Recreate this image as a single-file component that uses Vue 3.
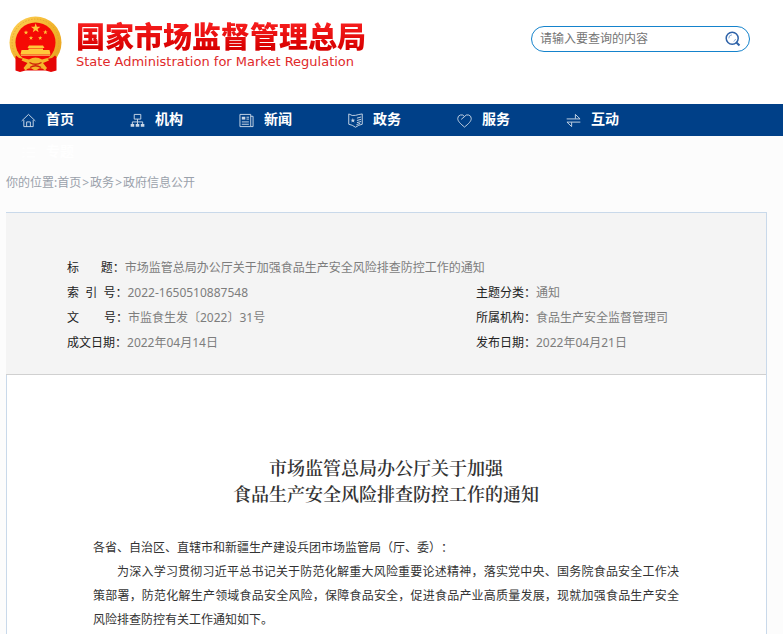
<script setup>
import { ref } from 'vue'

const keyword = ref('')

const nav = [
  { text: '首页', icon: 'home' },
  { text: '机构', icon: 'org' },
  { text: '新闻', icon: 'news' },
  { text: '政务', icon: 'gov' },
  { text: '服务', icon: 'heart' },
  { text: '互动', icon: 'swap' },
  { text: '专题', icon: 'list' }
]

const meta = [
  { label: '标\u00a0\u00a0\u00a0\u00a0\u00a0\u00a0\u00a0题：', value: '市场监管总局办公厅关于加强食品生产安全风险排查防控工作的通知', wide: true },
  { label: '索\u00a0\u00a0引\u00a0\u00a0号：', value: '2022-1650510887548' },
  { label: '主题分类：', value: '通知' },
  { label: '文\u00a0\u00a0\u00a0\u00a0\u00a0\u00a0\u00a0\u00a0号：', value: '市监食生发〔2022〕31号' },
  { label: '所属机构：', value: '食品生产安全监督管理司' },
  { label: '成文日期：', value: '2022年04月14日' },
  { label: '发布日期：', value: '2022年04月21日' }
]

const star = 'M0-1 .24-.31.95-.31.38.12.59.81 0 .4-.59.81-.38.12-.95-.31-.24-.31Z'
</script>

<template>
  <div class="page" lang="zh-CN">
    <header class="top">
      <a class="brand" href="#">
        <svg class="emblem" viewBox="0 0 53 57" aria-hidden="true">
          <defs>
            <linearGradient id="gold" x1="0" y1="0" x2="1" y2="1">
              <stop offset="0" stop-color="#ffd45a" />
              <stop offset=".5" stop-color="#f2b52c" />
              <stop offset="1" stop-color="#e79f1f" />
            </linearGradient>
          </defs>
          <circle cx="26.5" cy="26.5" r="26" fill="url(#gold)" />
          <circle cx="26.5" cy="26.5" r="23.4" fill="none" stroke="#e0a02c" stroke-width=".8" stroke-dasharray="1.5 1.5" />
          <circle cx="26.5" cy="26.5" r="20" fill="#f50a05" />
          <g fill="#ffc83a">
            <path :d="star" transform="translate(26.7 12.3) scale(5)" />
            <path :d="star" transform="translate(17 16.6) scale(2.4)" />
            <path :d="star" transform="translate(36.4 16.2) scale(2.4)" />
            <path :d="star" transform="translate(22 22) scale(2.3)" />
            <path :d="star" transform="translate(31.2 22) scale(2.3)" />
            <path d="M20 29.5h14l1.5 2.5h-17ZM19.5 32.5h14.5v4h-14.5ZM12.5 34h28l1 4.5h-30Z" />
          </g>
          <path d="M12 39.3h29" stroke="#ffe07a" stroke-width=".8" />
          <path d="M7 39.500 10 42l10 2 6.500-3 6.500 3 10-2 3-2.500 1.500 1.500v13.500L42 56l-5.500-1.500H16.500L11 56l-4.500-1.500V41Z" fill="#e60505" />
          <path d="M20 43.500q6.500-4 13 0l5.500-1.500 1.500 2.500-6 2.500 4 5-2 2.500q-3-3-6-2-3.500 3.500-7.500 0-3-1-6 2l-2-2.500 4-5-6-2.500 1.500-2.500Z" fill="#f5b62c" />
          <path d="M20.500 46.500q6 3.500 12 0M21 51.500q5.500-3.500 11 0" fill="none" stroke="#cf2209" stroke-width="1.300" />
        </svg>
        <span class="brand-text">
          <span class="brand-cn">国家市场监督管理总局</span>
          <span class="brand-en">State Administration for Market Regulation</span>
        </span>
      </a>
      <form class="search" role="search" @submit.prevent>
        <input v-model="keyword" type="text" aria-label="请输入要查询的内容" placeholder="请输入要查询的内容" />
        <button type="submit" aria-label="搜索">
          <svg viewBox="0 0 16 16" fill="none" stroke="#2e62a8" aria-hidden="true">
            <circle cx="7.200" cy="7.200" r="6" stroke-width="1.500" />
            <path d="M3.800 7.400a3.500 3.500 0 0 1 3.200-3.600M10.600 8a3.500 3.500 0 0 1-2 2.400" stroke-width=".9" stroke="#7ba0d0" />
            <path d="m11.200 11.300 3.300 3.200" stroke-width="2" />
          </svg>
        </button>
      </form>
    </header>

    <nav class="nav">
      <ul>
        <li v-for="item in nav" :key="item.text">
          <a href="#">
            <svg viewBox="0 0 16 16" fill="none" stroke="currentColor" aria-hidden="true">
              <g v-if="item.icon === 'home'">
                <path d="M.7 8.500 8 1.500l7.300 7M3 7.500v7h10v-7M6 14.500v-5h4v5" />
              </g>
              <g v-else-if="item.icon === 'org'">
                <path d="M4.500 1.500h7v5h-7ZM8 6.500V12M2.500 12V9.500h11V12" />
                <path d="M.7 11.700h3.800v3H.7ZM6.100 11.700h3.800v3H6.100ZM11.500 11.700h3.800v3h-3.800Z" fill="currentColor" stroke="none" />
              </g>
              <g v-else-if="item.icon === 'news'">
                <path d="M1 1.500h11.500v13H1ZM12.500 3.500h2.500v11h-2.500M3 9.500h7.500M3 12h7.500M8 4.500h2.700M8 6.500h2.700" />
                <path d="M3 4h3.700v3H3Z" fill="currentColor" stroke="none" />
              </g>
              <g v-else-if="item.icon === 'gov'">
                <path d="M.8 1Q4.500 3.500 8 2.500T15.200 1v11Q11.500 12.500 8 15.200 4.500 12.500.8 12ZM9.500 5.500l4.500-1.300M9.500 8l4.500-1.300M9.500 10.300 14 9M9 12.500l4-1.500" />
                <path :d="star" transform="translate(5.200 8) scale(2.700)" fill="currentColor" stroke="none" />
              </g>
              <g v-else-if="item.icon === 'heart'">
                <path d="M8 15C4 11.700.8 9 .8 5.800A3.900 3.900 0 0 1 8 3.800a3.900 3.900 0 0 1 7.200 2C15.200 9 12 11.700 8 15ZM4.500 6.800 8 3.800" />
              </g>
              <g v-else-if="item.icon === 'swap'">
                <path d="M.7 6.300h14.300L10 1.500v4.500M15.300 9.700H1L6 14.500V10" />
              </g>
              <g v-else>
                <path d="M6 3.500h9M6 8h9M6 12.500h9M1.500 3.500h2M1.500 8h2M1.500 12.500h2" />
              </g>
            </svg>
            <span>{{ item.text }}</span>
          </a>
        </li>
      </ul>
    </nav>

    <div class="crumbs">你的位置:<a href="#">首页</a><span>&gt;</span><a href="#">政务</a><span>&gt;</span><a href="#">政府信息公开</a></div>

    <main class="panel">
      <dl class="meta">
        <div v-for="row in meta" :key="row.label" :class="{ wide: row.wide }">
          <dt>{{ row.label }}</dt>
          <dd>{{ row.value }}</dd>
        </div>
      </dl>
      <article class="doc">
        <h1>市场监管总局办公厅关于加强<br />食品生产安全风险排查防控工作的通知</h1>
        <p>各省、自治区、直辖市和新疆生产建设兵团市场监管局（厅、委）：</p>
        <p class="indent">为深入学习贯彻习近平总书记关于防范化解重大风险重要论述精神，落实党中央、国务院食品安全工作决策部署，防范化解生产领域食品安全风险，保障食品安全，促进食品产业高质量发展，现就加强食品生产安全风险排查防控有关工作通知如下。</p>
      </article>
    </main>
  </div>
</template>

<style>
body {
  background: #fcfcfc;
}
</style>

<style scoped>
.page {
  display: flex;
  flex-direction: column;
  min-height: 100vh;
  font: 12px/24px "Noto Sans", "Noto Sans CJK SC", sans-serif;
  text-spacing-trim: space-all;
  color: #333;
}
a {
  color: inherit;
  text-decoration: none;
}
.top {
  display: flex;
  justify-content: space-between;
  align-items: flex-start;
  padding: 16px 33px 0 9px;
  min-height: 88px;
  background: #fff;
}
.brand {
  display: flex;
  gap: 14px;
}
.emblem {
  width: 53px;
  height: 57px;
}
.brand-text {
  display: flex;
  flex-direction: column;
  padding-top: 1px;
  white-space: nowrap;
}
.brand-cn {
  font: 900 29px/37px "Noto Sans CJK SC", sans-serif;
  background: linear-gradient(#f51c1c 20%, #d80000 85%);
  -webkit-background-clip: text;
  background-clip: text;
  color: transparent;
}
.brand-en {
  font: 13px/15px "DejaVu Sans", sans-serif;
  color: #e02a2a;
}
.search {
  display: flex;
  align-items: center;
  box-sizing: border-box;
  width: 219px;
  height: 26px;
  margin-top: 10px;
  padding: 0 8px;
  border: 1px solid #1583cc;
  border-radius: 13px;
  background: #fff;
}
.search input {
  flex: 1;
  min-width: 0;
  padding: 0;
  border: 0;
  outline: 0;
  background: none;
  font: inherit;
  color: #333;
}
.search input::placeholder {
  color: #757575;
  opacity: 1;
}
.search button {
  display: flex;
  padding: 0;
  border: 0;
  background: none;
  cursor: pointer;
}
.search svg {
  width: 16px;
  height: 16px;
}
.nav {
  height: 32px;
  background: #004088;
}
.nav ul {
  display: flex;
  flex-wrap: wrap;
  margin: 0;
  padding: 0 21px;
  list-style: none;
}
.nav li {
  width: 109px;
}
.nav a {
  display: flex;
  align-items: center;
  gap: 10px;
  height: 32px;
  color: #fff;
  font-size: 14px;
  font-weight: 700;
  line-height: 20px;
}
.nav a span {
  padding-bottom: 2px;
}
.nav svg {
  width: 15px;
  height: 15px;
  opacity: 0.8;
}
.crumbs {
  padding: 35px 6px 17px;
  color: #9aa1ab;
}
.crumbs span {
  padding: 0 1px;
}
.panel {
  display: flex;
  flex: 1;
  flex-direction: column;
  margin: 0 16px 0 6px;
  border-top: 1px solid #c9d9ea;
  border-right: 1px solid #c9d9ea;
  background: #fff;
}
.meta {
  display: grid;
  grid-template-columns: 64fr 36fr;
  margin: 0;
  padding: 42px 60px 19px 61px;
  border-bottom: 1px solid #d0d0d0;
  background: #f4f4f4;
  line-height: 25px;
}
.meta div {
  display: flex;
}
.meta .wide {
  grid-column: 1 / -1;
}
.meta dt {
  color: #222;
  white-space: nowrap;
}
.meta dd {
  margin: 0;
  color: #7d7d7d;
}
.doc {
  flex: 1;
  padding: 79px 87px 0 86px;
  border-left: 1px solid #c9d9ea;
}
.doc h1 {
  margin: 0 0 30px;
  font: 600 18px/26px "Noto Serif CJK SC", "Noto Sans CJK SC", serif;
  text-align: center;
}
.doc p {
  margin: 0;
  text-align: justify;
}
.doc .indent {
  text-indent: 2em;
}
</style>
